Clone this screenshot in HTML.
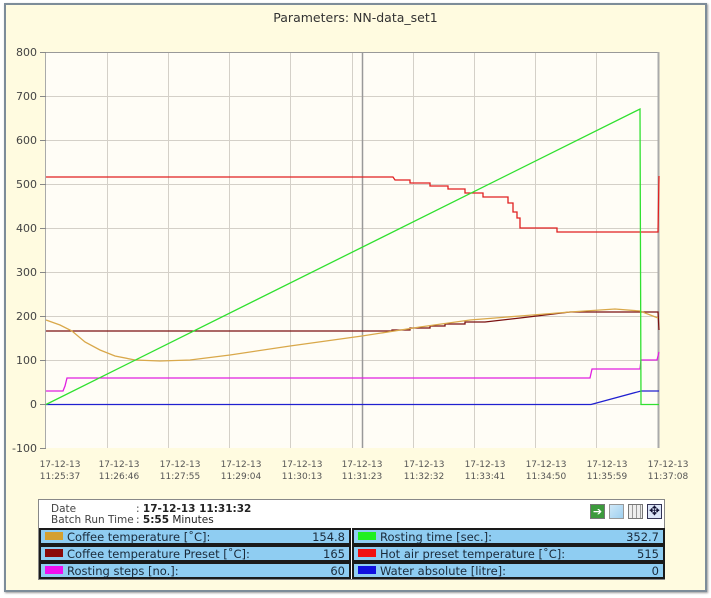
<!DOCTYPE html>
<html><head><meta charset="utf-8"><style>
*{margin:0;padding:0;box-sizing:border-box}
body{width:711px;height:598px;background:#fff;position:relative;overflow:hidden;font-family:"DejaVu Sans","Liberation Sans",sans-serif}
#frame{position:absolute;left:4px;top:3px;width:703px;height:589px;background:#fffbe0;border:2px solid #7d8c99;box-shadow:1px 1px 2px #999}
#title{position:absolute;left:0;width:711px;top:10px;text-align:center;font-size:12.5px;color:#333}
svg{position:absolute;left:0;top:0}
#panel{position:absolute;left:38px;top:499px;width:627px;height:81px;border:1px solid #888;background:#fff}
.info{position:absolute;font-size:10.5px;color:#444}
.row{position:absolute;height:17px;background:#8fcdf2;border:2px solid #1a1a1a;font-size:11.5px;color:#1a2a3a}
.row .sw{position:absolute;left:4px;top:2px;width:18px;height:8px}
.row .l{position:absolute;left:26px;top:0px;line-height:14px}
.row .v{position:absolute;right:4px;top:0;line-height:14px}
.ic{position:absolute;top:504px;width:15px;height:15px}
</style></head><body>
<div id="frame"></div>
<div id="title">Parameters: NN-data_set1</div>
<svg width="711" height="598" font-family="DejaVu Sans, Liberation Sans, sans-serif">
<rect x="46" y="52" width="613" height="396" fill="#fffdf6"/>
<g stroke="#d4d0c8" stroke-width="1">
<line x1="46" y1="96.5" x2="659" y2="96.5"/><line x1="46" y1="140.5" x2="659" y2="140.5"/><line x1="46" y1="184.5" x2="659" y2="184.5"/><line x1="46" y1="228.5" x2="659" y2="228.5"/><line x1="46" y1="272.5" x2="659" y2="272.5"/><line x1="46" y1="316.5" x2="659" y2="316.5"/><line x1="46" y1="360.5" x2="659" y2="360.5"/><line x1="46" y1="404.5" x2="659" y2="404.5"/>
<line x1="107.5" y1="52" x2="107.5" y2="448"/><line x1="168.5" y1="52" x2="168.5" y2="448"/><line x1="229.5" y1="52" x2="229.5" y2="448"/><line x1="290.5" y1="52" x2="290.5" y2="448"/><line x1="352.5" y1="52" x2="352.5" y2="448"/><line x1="413.5" y1="52" x2="413.5" y2="448"/><line x1="474.5" y1="52" x2="474.5" y2="448"/><line x1="535.5" y1="52" x2="535.5" y2="448"/><line x1="596.5" y1="52" x2="596.5" y2="448"/>
</g>
<line x1="362.5" y1="52" x2="362.5" y2="448" stroke="#999" stroke-width="1.5"/>
<line x1="46" y1="52.5" x2="659" y2="52.5" stroke="#999"/>
<line x1="45.5" y1="52" x2="45.5" y2="448" stroke="#aaa"/>
<line x1="658.5" y1="52" x2="658.5" y2="448" stroke="#aaa" stroke-width="2"/>
<g stroke="#888"><line x1="40" y1="52.5" x2="46" y2="52.5"/><line x1="40" y1="96.5" x2="46" y2="96.5"/><line x1="40" y1="140.5" x2="46" y2="140.5"/><line x1="40" y1="184.5" x2="46" y2="184.5"/><line x1="40" y1="228.5" x2="46" y2="228.5"/><line x1="40" y1="272.5" x2="46" y2="272.5"/><line x1="40" y1="316.5" x2="46" y2="316.5"/><line x1="40" y1="360.5" x2="46" y2="360.5"/><line x1="40" y1="404.5" x2="46" y2="404.5"/><line x1="40" y1="448.5" x2="46" y2="448.5"/></g>
<g font-size="11" fill="#444" text-anchor="end">
<text x="37" y="56">800</text><text x="37" y="100">700</text><text x="37" y="144">600</text><text x="37" y="188">500</text><text x="37" y="232">400</text><text x="37" y="276">300</text><text x="37" y="320">200</text><text x="37" y="364">100</text><text x="37" y="408">0</text><text x="37" y="452">-100</text>
</g>
<g font-size="9" fill="#555" text-anchor="middle">
<text x="60" y="467">17-12-13</text><text x="60" y="479">11:25:37</text>
<text x="119" y="467">17-12-13</text><text x="119" y="479">11:26:46</text>
<text x="180" y="467">17-12-13</text><text x="180" y="479">11:27:55</text>
<text x="241" y="467">17-12-13</text><text x="241" y="479">11:29:04</text>
<text x="302" y="467">17-12-13</text><text x="302" y="479">11:30:13</text>
<text x="362" y="467">17-12-13</text><text x="362" y="479">11:31:23</text>
<text x="424" y="467">17-12-13</text><text x="424" y="479">11:32:32</text>
<text x="485" y="467">17-12-13</text><text x="485" y="479">11:33:41</text>
<text x="546" y="467">17-12-13</text><text x="546" y="479">11:34:50</text>
<text x="607" y="467">17-12-13</text><text x="607" y="479">11:35:59</text>
<text x="668" y="467">17-12-13</text><text x="668" y="479">11:37:08</text>
</g>
<g fill="none" stroke-width="1.3">
<polyline stroke="#e02020" points="46,177 393,177 395,180 410,180 410,183 430,183 430,186 448,186 448,189 465,189 465,193 483,193 483,197 508,197 508,203 513,203 513,212 517,212 517,218 520,218 520,228 557,228 557,232 658,232 659,176"/>
<polyline stroke="#7a1010" points="46,331 392,331 392,330 410,330 410,328 430,328 430,326 445,326 445,324 465,324 465,322 485,322 520,318 570,312 658,312 659,330"/>
<polyline stroke="#d9a84a" points="46,320 60,325 72,331 85,342 100,350 115,356 135,360 160,361 190,360 230,355 290,346 362,336 420,327 470,320 520,316 570,312 615,309 640,311 658,318"/>
<polyline stroke="#e020e0" points="46,391 63,391 65,386 67,378 590,378 592,369 640,369 641,360 657,360 659,352"/>
<polyline stroke="#2020d0" points="46,404.5 591,404.5 641,391 659,391"/>
<polyline stroke="#30e030" points="46,404.5 640,109 641,404.5 659,404.5"/>
</g>
</svg>
<div id="panel"></div>
<div class="info" style="left:51px;top:503px">Date</div>
<div class="info" style="left:136px;top:503px">: <b style="color:#222">17-12-13 11:31:32</b></div>
<div class="info" style="left:51px;top:514px">Batch Run Time</div>
<div class="info" style="left:136px;top:514px">: <b style="color:#222">5:55</b> <span style="color:#222">Minutes</span></div>
<div class="ic" style="left:590px;background:#3c9a3c;border:1px solid #777;color:#fff;font-size:11px;line-height:13px;text-align:center;font-weight:bold">➔</div>
<div class="ic" style="left:609px;background:linear-gradient(135deg,#cfe8f8,#9fd0f0);border:1px solid #999"></div>
<div class="ic" style="left:628px;background:repeating-linear-gradient(90deg,#eee 0 3px,#999 3px 4px),#ddd;border:1px solid #777"></div>
<div class="ic" style="left:647px;border:1px solid #335;background:#dde6f8;color:#113;font-size:13px;line-height:13px;text-align:center">✥</div>
<div class="row" style="left:39px;top:528px;width:312px"><span class="sw" style="background:#d4a030"></span><span class="l">Coffee temperature [˚C]:</span><span class="v">154.8</span></div>
<div class="row" style="left:39px;top:545px;width:312px"><span class="sw" style="background:#8a0a0a"></span><span class="l">Coffee temperature Preset [˚C]:</span><span class="v">165</span></div>
<div class="row" style="left:39px;top:562px;width:312px"><span class="sw" style="background:#f010f0"></span><span class="l">Rosting steps [no.]:</span><span class="v">60</span></div>
<div class="row" style="left:352px;top:528px;width:313px"><span class="sw" style="background:#20f020"></span><span class="l">Rosting time [sec.]:</span><span class="v">352.7</span></div>
<div class="row" style="left:352px;top:545px;width:313px"><span class="sw" style="background:#f01010"></span><span class="l">Hot air preset temperature [˚C]:</span><span class="v">515</span></div>
<div class="row" style="left:352px;top:562px;width:313px"><span class="sw" style="background:#1010e0"></span><span class="l">Water absolute [litre]:</span><span class="v">0</span></div>
</body></html>
